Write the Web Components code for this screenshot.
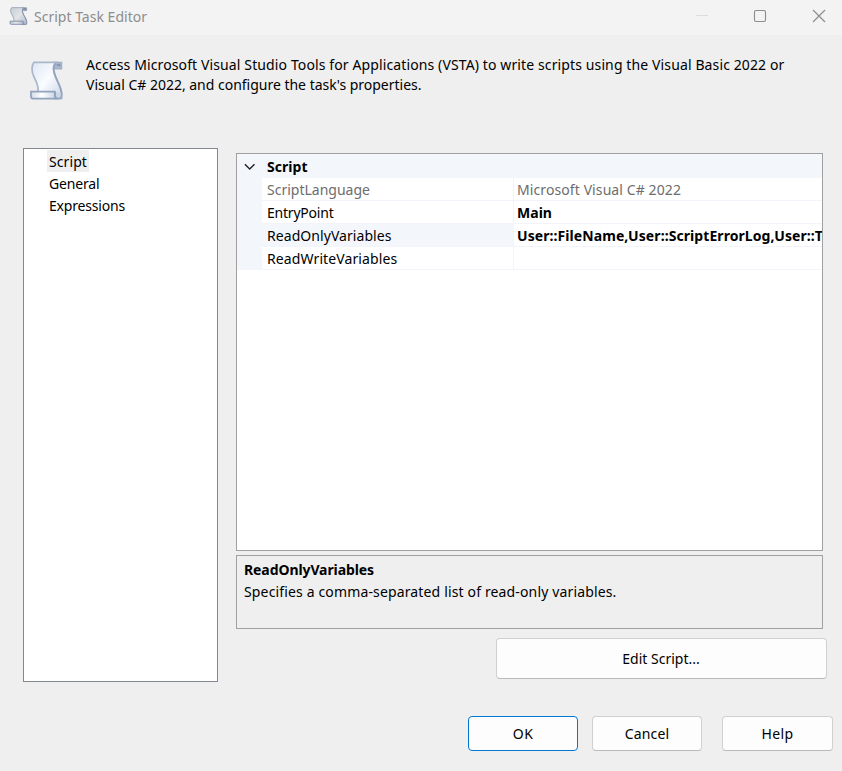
<!DOCTYPE html>
<html lang="en">
<head>
<meta charset="utf-8">
<title>Script Task Editor</title>
<style>
html,body{margin:0;height:100%;overflow:hidden;background:#efefef}
body{font:14px/20px "Noto Sans","Open Sans",sans-serif;color:#000}
</style>
</head>
<body>
<script-task-editor></script-task-editor>
<script>
const define=(name,html,after)=>customElements.define(name,class extends HTMLElement{
  constructor(){super();const t=document.createElement('template');t.innerHTML=html;
    this.attachShadow({mode:'open'}).append(t.content.cloneNode(true));}
  connectedCallback(){if(after)after.call(this);}
});

// A single text run whose tracking is adjusted to occupy the given width.
define('text-run',`<style>:host{display:inline-block;white-space:pre}span{display:inline-block}</style><span><slot></slot></span>`,function(){
  const w=+this.getAttribute('w');if(!w)return;
  const s=this.shadowRoot.querySelector('span');
  const n=this.textContent.length;
  s.style.letterSpacing=((w-s.getBoundingClientRect().width)/n).toFixed(3)+'px';
});

define('scroll-icon',`<style>:host{display:block}svg{display:block;width:100%;height:100%}</style>
<svg viewBox="0 0 36 40" preserveAspectRatio="none">
<defs><linearGradient id="p" x1="0" y1="0" x2="1" y2="1"><stop offset="0" stop-color="#dfe7f2"/><stop offset=".5" stop-color="#fafcff"/><stop offset="1" stop-color="#c9d4e5"/></linearGradient>
<linearGradient id="r" x1="0" y1="0" x2="1" y2="0"><stop offset="0" stop-color="#d3dcea"/><stop offset=".4" stop-color="#fff"/><stop offset="1" stop-color="#c2cddf"/></linearGradient></defs>
<path d="M25 1.500H33.500V8H25.500Z" fill="#a9b6cb" stroke="#a3b1c7" stroke-width="1.400"/>
<path d="M28.500 4H31.500V5.500" fill="none" stroke="#7c8cab" stroke-width="1.400"/>
<path d="M5 1.500H28C25 4 24.500 8 26 13C28 20 33.500 26 33.500 33V38.500H26L9 33C11 27 7.500 21 5 16C2.500 11 2.500 4.500 5 1.500Z" fill="url(#p)" stroke="#aab7cc" stroke-width="1.800"/>
<path d="M27.500 2.500C24.500 5 25 10 27 15C29 21 33.300 27 33.500 34" fill="none" stroke="#94a4be" stroke-width="1.700"/>
<path d="M2 31.500H26.500V35C26.500 37 28 38.500 30 38.500H4C2.500 38.500 2 37.500 2 36Z" fill="url(#r)" stroke="#93a3bd" stroke-width="1.800"/>
<path d="M27 31.500V36C27 39 33.500 39.500 33.500 36V33" fill="#cbd6e6" stroke="#93a3bd" stroke-width="1.500"/>
</svg>`);

define('title-bar',`<style>:host{display:flex;height:35px;background:#f3f3f3;color:#8d8d8d;align-items:flex-start}
scroll-icon{width:19px;height:18px;margin:7px 0 0 9px;filter:brightness(.85) contrast(1.15)}
text-run{margin:7px 0 0 6px}
svg{margin-left:auto;width:152px;height:35px}</style>
<scroll-icon></scroll-icon><text-run w="113">Script Task Editor</text-run>
<svg viewBox="690 0 152 35" fill="none"><path d="M696 15.500H708" stroke="#dcdcdc"/><rect x="754.500" y="10.500" width="11" height="11" rx="1.500" stroke="#8c8c8c" stroke-width="1.100"/><path d="M813 10L825 22M825 10L813 22" stroke="#8c8c8c" stroke-width="1.200"/></svg>`);

define('task-intro',`<style>:host{display:flex;height:113px;box-sizing:border-box;padding:20px 0 0 29px}
scroll-icon{width:35px;height:39px;margin-top:6px}div{margin-left:22px;display:flex;flex-direction:column;align-items:flex-start}</style>
<scroll-icon></scroll-icon><div><text-run w="698.500">Access Microsoft Visual Studio Tools for Applications (VSTA) to write scripts using the Visual Basic 2022 or</text-run><text-run w="335.500">Visual C# 2022, and configure the task's properties.</text-run></div>`);

define('page-list',`<style>:host{display:flex;flex-direction:column;align-items:flex-start;box-sizing:border-box;width:195px;height:534px;background:#fff;border:1px solid #828790;padding:1px 0 0 23px}</style><slot></slot>`);
define('page-item',`<style>:host{display:block;height:22px;box-sizing:border-box;line-height:20px;padding:2px 2px 0}:host([selected]){background:#efefef}</style><slot></slot>`);

define('property-grid',`<style>:host{display:block;box-sizing:border-box;width:587px;height:398px;background:#fff;border:1px solid #a0a0a0;overflow:hidden}</style><slot></slot>`);
define('property-group',`<style>:host{display:block;background:#f3f7fc}
header{display:flex;height:24px;box-sizing:border-box;padding:1px 0 0 7px;line-height:23px;font-weight:700}
svg{width:12px;height:8px;margin:8px 11px 0 0}
div{padding-left:25px}</style>
<header><svg viewBox="0 0 12 8" fill="none"><path d="M.9 1.200L5.700 6L10.500 1.200" stroke="#222" stroke-width="1.400"/></svg><slot name="title"></slot></header><div><slot></slot></div>`);
define('property-row',`<style>:host{display:grid;grid-template-columns:251px 1fr;height:23px;line-height:23px}
div{box-sizing:border-box;height:23px;overflow:hidden;white-space:nowrap;background:#fff;border-bottom:1px solid #f1f5fb}
.n{padding-left:5px}.v{border-left:1px solid #f1f5fb;padding-left:3px;font-weight:700;min-width:0}
:host([disabled]){color:#6d6d6d}:host([disabled]) .v{font-weight:400}
:host([selected]) .n{background:#f3f7fc}</style><div class="n"><slot name="name"></slot></div><div class="v"><slot></slot></div>`);

define('help-pane',`<style>:host{display:flex;flex-direction:column;align-items:flex-start;box-sizing:border-box;width:587px;height:74px;border:1px solid #a0a0a0;padding:3px 7px;line-height:22px;margin-top:4px}::slotted([slot=title]){font-weight:700}</style><slot name="title"></slot><slot></slot>`);

define('push-button',`<style>:host{display:block}button{display:flex;align-items:center;justify-content:center;box-sizing:border-box;width:100%;height:100%;padding:0;border:1px solid #d0d0d0;border-bottom-color:#bababa;border-radius:4px;background:#fdfdfd;font:inherit;color:inherit}
:host([default]) button{border-color:#0078d4}</style><button><slot></slot></button>`);

define('script-task-editor',`<style>
:host{display:flex;flex-direction:column;width:842px;height:771px;background:#efefef}
main{display:flex;padding-left:23px;gap:18px}
.right{display:flex;flex-direction:column;padding-top:5px}
.edit{width:331px;height:41px;margin:9px 0 0 260px}
.edit text-run{margin-right:1px}
footer{display:flex;padding:34px 0 0 468px}
footer push-button{width:110px;height:35px}
.cancel{margin-left:14px}footer .help{margin-left:20px;width:111px}
</style>
<title-bar></title-bar><task-intro></task-intro>
<main>
<page-list><page-item selected><text-run w="38">Script</text-run></page-item><page-item><text-run w="50.500">General</text-run></page-item><page-item><text-run w="76">Expressions</text-run></page-item></page-list>
<div class="right">
<property-grid><property-group><text-run slot="title" w="40.500">Script</text-run>
<property-row disabled><text-run slot="name" w="103">ScriptLanguage</text-run><text-run w="164">Microsoft Visual C# 2022</text-run></property-row>
<property-row><text-run slot="name" w="66.500">EntryPoint</text-run><text-run w="35">Main</text-run></property-row>
<property-row selected><text-run slot="name" w="124.500">ReadOnlyVariables</text-run><text-run w="306">User::FileName,User::ScriptErrorLog,User::T</text-run></property-row>
<property-row><text-run slot="name" w="130.300">ReadWriteVariables</text-run></property-row>
</property-group></property-grid>
<help-pane><text-run slot="title" w="130">ReadOnlyVariables</text-run><text-run w="372.500">Specifies a comma-separated list of read-only variables.</text-run></help-pane>
<push-button class="edit"><text-run w="77.500">Edit Script...</text-run></push-button>
</div></main>
<footer><push-button default><text-run w="20.500">OK</text-run></push-button><push-button class="cancel"><text-run w="44.500">Cancel</text-run></push-button><push-button class="help"><text-run w="32">Help</text-run></push-button></footer>`);
</script>
</body>
</html>
